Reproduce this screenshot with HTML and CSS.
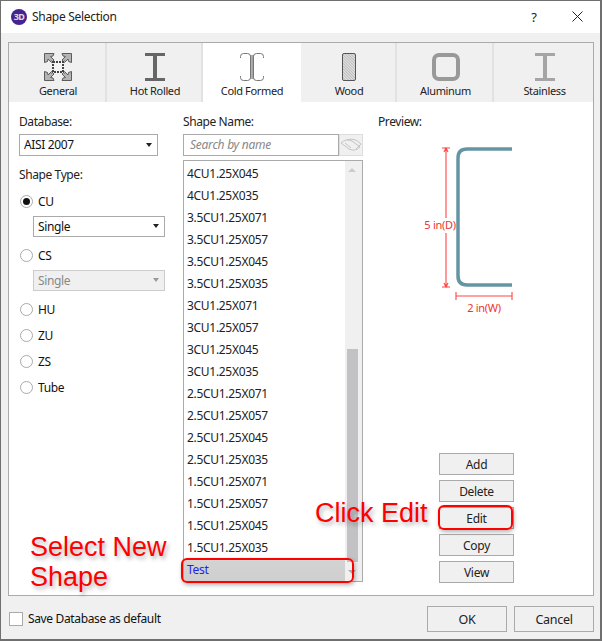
FILE: index.html
```html
<!DOCTYPE html>
<html lang="en">
<head>
<meta charset="utf-8">
<title>Shape Selection</title>
<link rel="stylesheet" href="styles.css">
</head>
<body>
<div class="window">
  <header class="titlebar">
    <span class="appicon">3D</span>
    <span class="title">Shape Selection</span>
    <span class="help">?</span>
    <svg class="close" width="11" height="11" viewBox="0 0 11 11"><path d="M.5.5l10 10M10.500.5l-10 10" stroke="#222" fill="none"/></svg>
  </header>
  <main class="panel">
    <nav class="tabs">
      <div class="tab t1">
        <svg width="28" height="28" viewBox="0 0 28 28">
          <defs>
            <g id="corner">
              <path d="M.5.5h9.500l-1 2.500-2.500.5 3.500 3.500-2.500 2.500-3.500-3.500-.5 2.500-3 1z" fill="#b4b4b4" stroke="#5c5c5c"/>
              <path d="M7.500 7.500l3 3" stroke="#555"/>
            </g>
          </defs>
          <use href="#corner"/>
          <use href="#corner" transform="matrix(-1 0 0 1 28 0)"/>
          <use href="#corner" transform="matrix(1 0 0 -1 0 28)"/>
          <use href="#corner" transform="matrix(-1 0 0 -1 28 28)"/>
          <rect x="9" y="9" width="10" height="10" fill="#f4f4f4" stroke="#444" stroke-width="2" stroke-dasharray="2 1"/>
        </svg>
        <span>General</span>
      </div>
      <div class="tab t2">
        <svg width="20" height="28" viewBox="0 0 20 28"><path d="M0 0h20v3H12v22h8v3H0v-3h8V3H0z" fill="#666"/></svg>
        <span>Hot Rolled</span>
      </div>
      <div class="tab t3 active">
        <svg width="24" height="28" viewBox="0 0 24 28">
          <defs><linearGradient id="web"><stop offset="0" stop-color="#bbb"/><stop offset="1" stop-color="#999"/></linearGradient></defs>
          <rect x="10" y="2" width="4" height="24" fill="url(#web)"/>
          <path d="M.5 5V3.500Q.5.5 3.500.5H7.500Q10.500.5 10.500 3.500V24.500Q10.500 27.500 7.500 27.500H3.500Q.5 27.500.5 24.500V23M23.500 5V3.500Q23.500.5 20.500.5H16.500Q13.500.5 13.500 3.500V24.500Q13.500 27.500 16.500 27.500H20.500Q23.500 27.500 23.500 24.500V23" fill="none" stroke="#777"/>
        </svg>
        <span>Cold Formed</span>
      </div>
      <div class="tab t4">
        <svg width="14" height="28" viewBox="0 0 14 28">
          <defs><pattern id="grain" width="2" height="2" patternUnits="userSpaceOnUse" patternTransform="rotate(45)"><rect width="2" height="2" fill="#e4e4e4"/><rect width="2" height="1" fill="#bbb"/></pattern></defs>
          <rect x=".5" y=".5" width="13" height="27" rx="1.500" fill="url(#grain)" stroke="#555"/>
        </svg>
        <span>Wood</span>
      </div>
      <div class="tab t5">
        <svg width="28" height="28" viewBox="0 0 28 28"><rect x="2" y="2" width="24" height="24" rx="5" fill="none" stroke="#999" stroke-width="4"/></svg>
        <span>Aluminum</span>
      </div>
      <div class="tab t6">
        <svg width="20" height="28" viewBox="0 0 20 28"><path d="M0 0h20v3H12v22h8v3H0v-3h8V3H0z" fill="#a5a5a5"/></svg>
        <span>Stainless</span>
      </div>
    </nav>
    <section class="content">
      <div class="col-left">
        <div class="label">Database:</div>
        <div class="select db"><span>AISI 2007</span><i class="caret"></i></div>
        <div class="label type">Shape Type:</div>
        <div class="radio"><i class="dot on"></i>CU</div>
        <div class="select sub"><span>Single</span><i class="caret"></i></div>
        <div class="radio"><i class="dot"></i>CS</div>
        <div class="select sub disabled"><span>Single</span><i class="caret"></i></div>
        <div class="radio"><i class="dot"></i>HU</div>
        <div class="radio"><i class="dot"></i>ZU</div>
        <div class="radio"><i class="dot"></i>ZS</div>
        <div class="radio"><i class="dot"></i>Tube</div>
      </div>
      <div class="col-mid">
        <div class="label">Shape Name:</div>
        <div class="search">
          <div class="search-input">Search by name</div>
          <div class="eye">
            <svg width="22" height="14" viewBox="0 0 22 14" fill="none" stroke="#c4c4c4"><path d="M1 5Q6 0 12 3L20 9Q15 14 9 11z"/><path d="M7 2Q14-1 21 6L16 11"/><path d="M5 5l6 5"/></svg>
          </div>
        </div>
        <div class="list">
          <ul class="rows">
            <li>4CU1.25X045</li><li>4CU1.25X035</li><li>3.5CU1.25X071</li><li>3.5CU1.25X057</li>
            <li>3.5CU1.25X045</li><li>3.5CU1.25X035</li><li>3CU1.25X071</li><li>3CU1.25X057</li>
            <li>3CU1.25X045</li><li>3CU1.25X035</li><li>2.5CU1.25X071</li><li>2.5CU1.25X057</li>
            <li>2.5CU1.25X045</li><li>2.5CU1.25X035</li><li>1.5CU1.25X071</li><li>1.5CU1.25X057</li>
            <li>1.5CU1.25X045</li><li>1.5CU1.25X035</li><li class="selected">Test</li>
          </ul>
          <div class="scrollbar"><i class="arrow up"></i><div class="thumb"></div><i class="arrow down"></i></div>
        </div>
      </div>
      <div class="col-right">
        <div class="label">Preview:</div>
        <svg class="diagram" width="136" height="176" viewBox="0 0 136 176">
          <path d="M134 6H89Q80 6 80 15V133Q80 142 89 142H134" fill="none" stroke="#6595a5" stroke-width="3.500"/>
          <path d="M68 5V144M64 5h8M64 144h8M66 9l2-4 2 4M66 140l2 4 2-4" fill="none" stroke="#f44" stroke-width="1.100"/>
          <rect x="46" y="75" width="32" height="15" fill="#fff"/>
          <text x="62" y="86" text-anchor="middle" class="dim">5 in(D)</text>
          <path d="M78 153H134M78 149v8M134 149v8" fill="none" stroke="#f44" stroke-width="1.100"/>
          <text x="106" y="169" text-anchor="middle" class="dim">2 in(W)</text>
        </svg>
        <div class="actions">
          <button class="btn">Add</button>
          <button class="btn">Delete</button>
          <button class="btn">Edit</button>
          <button class="btn">Copy</button>
          <button class="btn">View</button>
        </div>
      </div>
    </section>
  </main>
  <footer class="footer">
    <i class="check"></i><span class="check-label">Save Database as default</span>
    <button class="btn big ok">OK</button>
    <button class="btn big">Cancel</button>
  </footer>
  <div class="note note-select">Select New<br>Shape</div>
  <div class="note note-edit">Click Edit</div>
  <div class="ring ring-test"></div>
  <div class="ring ring-edit"></div>
</div>
</body>
</html>
```
FILE: styles.css
```css
* { box-sizing: border-box; }
html, body { margin: 0; padding: 0; }
body { font-family: "Noto Sans", "Open Sans", sans-serif; font-size: 12px; color: #111; background: #f0f0f0; }
button { font: inherit; color: inherit; }
i { font-style: normal; display: block; }

.window { position: relative; width: 602px; height: 641px; border: 1px solid #6f6f6f; border-width: 1px 2px 2px 1px; background: #f0f0f0; display: flex; flex-direction: column; overflow: hidden; }

.titlebar { height: 32px; flex: none; background: #fff; display: flex; align-items: center; padding: 0 17px 1px 10px; }
.appicon { width: 16px; height: 16px; border-radius: 50%; background: #46238e; color: #ddd; font-size: 9px; font-weight: 700; line-height: 16px; text-align: center; letter-spacing: -.5px; }
.title { margin-left: 5px; font-size: 12px; color: #222; flex: 1; letter-spacing: -.3px; }
.help { font-size: 13px; margin-right: 35px; color: #222; }

.panel { flex: none; width: 586px; height: 554px; margin: 9px 0 0 7px; border: 1px solid #aaa; background: #fff; display: flex; flex-direction: column; }

.tabs { display: grid; grid-template-columns: 98px 96px 98px 96px 97px 1fr; height: 59px; flex: none; }
.tab { background: #f0f0f0; border-right: 2px solid #e2e2e2; display: flex; flex-direction: column; align-items: center; padding: 10px 0 0 2px; font-size: 11px; letter-spacing: -.35px; color: #222; }
.tab span { margin-top: 2px; line-height: 16px; }
.tab svg { display: block; }
.tab.active { background: #fff; border-right: 0; padding-left: 0; }
.t6 { border-right: 0; }

.content { flex: 1; display: flex; min-height: 0; padding: 12px 0 12px 10px; }
.label { line-height: 16px; letter-spacing: -.4px; color: #222; }
.col-left { width: 164px; flex: none; }
.select { margin-top: 4px; height: 22px; border: 1px solid #aaa; background: #fff; display: flex; align-items: center; justify-content: space-between; padding: 0 5px 1px 4px; letter-spacing: -.35px; }
.db { width: 139px; }
.sub { width: 132px; margin: 7px 0 0 14px; height: 21px; }
.disabled { background: #f0f0f0; color: #888; border-color: #ccc; }
.caret { width: 0; height: 0; border: 3.500px solid transparent; border-top: 4px solid #222; border-bottom: 0; }
.disabled .caret { border-top-color: #999; }
.type { margin-top: 11px; }
.radio { display: flex; align-items: center; height: 16px; margin-top: 10px; letter-spacing: -.35px; }
.dot { width: 13px; height: 13px; margin: 0 5px 0 1px; border: 1px solid #aaa; border-radius: 50%; background: #fff; position: relative; }
.dot.on::after { content: ""; position: absolute; left: 2px; top: 2px; width: 7px; height: 7px; border-radius: 50%; background: #111; }

.col-mid { width: 195px; flex: none; }
.search { display: flex; margin-top: 4px; width: 180px; height: 22px; }
.search-input { width: 156px; border: 1px solid #aaa; background: #fff; color: #888; font-style: italic; padding: 2px 0 0 6px; letter-spacing: -.25px; line-height: 16px; }
.eye { flex: 1; background: #f0f0f0; border: 1px solid #ddd; display: flex; align-items: center; justify-content: center; }
.list { margin-top: 4px; width: 180px; height: 422px; border: 1px solid #aaa; display: flex; background: #fff; }
.rows { list-style: none; margin: 2px 0 0; padding: 0; flex: 1; min-width: 0; }
.rows li { height: 22px; line-height: 22px; padding-left: 3px; letter-spacing: -.3px; color: #222; }
.rows .selected { background: linear-gradient(#d3d3d3, #cfcfcf); color: #2222ee; margin-right: -2px; position: relative; }
.scrollbar { width: 17px; flex: none; background: #f0f0f0; position: relative; }
.thumb { position: absolute; left: 2px; width: 11px; top: 188px; height: 213px; background: #c2c2c4; }
.arrow { position: absolute; left: 3px; width: 0; height: 0; border: 4px solid transparent; }
.arrow.up { top: 7px; border-bottom: 4px solid #ccc; border-top: 0; }
.arrow.down { bottom: 7px; border-top: 4px solid #aaa; border-bottom: 0; }

.col-right { flex: 1; display: flex; flex-direction: column; }
.diagram { display: block; margin-top: 13px; flex: none; }
.dim { font-size: 11px; fill: #e33; letter-spacing: -.3px; }
.actions { margin: auto 0 0 61px; width: 75px; display: flex; flex-direction: column; gap: 5px; }
.btn { height: 22px; padding: 0; border: 1px solid #aaa; background: #f0f0f0; text-align: center; letter-spacing: -.3px; color: #222; }

.footer { flex: 1; display: flex; align-items: center; padding: 3px 6px 0 8px; }
.check { width: 14px; height: 14px; border: 1px solid #aaa; background: #fff; }
.check-label { margin: 0 0 2px 5px; flex: 1; letter-spacing: -.35px; }
.btn.big { width: 80px; height: 26px; font-size: 12.500px; }
.ok { margin-right: 7px; }

.note { position: absolute; font-family: "Liberation Sans", Arial, sans-serif; font-size: 27px; line-height: 30px; color: #f00; text-shadow: 2px 3px 4px rgba(0,0,0,.3); }
.note-select { left: 29px; top: 531px; }
.note-edit { left: 314px; top: 497px; }
.ring { position: absolute; border: 2px solid #f00; border-radius: 6px; box-shadow: 1px 2px 4px rgba(0,0,0,.3); }
.ring-test { left: 180px; top: 557px; width: 173px; height: 25px; }
.ring-edit { left: 437px; top: 504px; width: 75px; height: 25px; }
```
